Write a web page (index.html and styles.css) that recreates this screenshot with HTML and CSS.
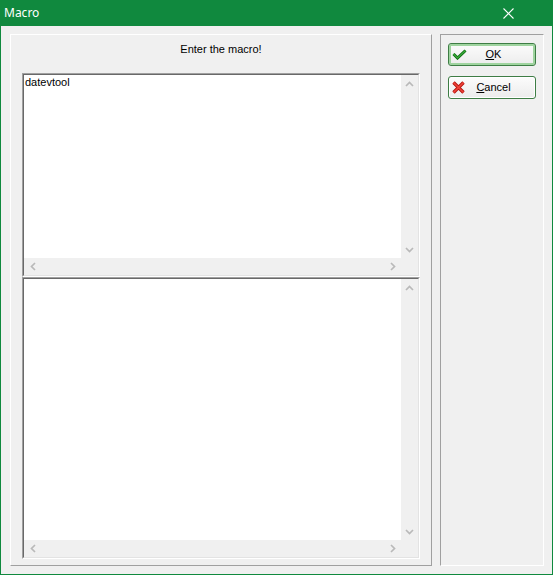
FILE: index.html
```html
<!DOCTYPE html>
<html lang="en">
<head>
    <meta charset="UTF-8">
    <title>Macro</title>
    <link rel="stylesheet" href="styles.css">
</head>
<body>
<div class="window">
    <div class="titlebar">
        <span class="title">Macro</span>
        <svg class="close" width="11" height="11" viewBox="0 0 11 11">
            <path d="M0.5 0.5 L10.5 10.5 M10.5 0.5 L0.5 10.5" stroke="#fff" stroke-width="1.1" fill="none"/>
        </svg>
    </div>

    <div class="client">
        <div class="panel-main">
            <div class="prompt">Enter the macro!</div>

            <div class="memo memo-top">
                <div class="memo-body">
                    <div class="memo-text">datevtool</div>
                    <div class="vscroll">
                        <span class="arrow"><svg width="9" height="6" viewBox="0 0 9 6"><polyline points="1,5 4.5,1.5 8,5"/></svg></span>
                        <span class="arrow"><svg width="9" height="6" viewBox="0 0 9 6"><polyline points="1,1 4.5,4.5 8,1"/></svg></span>
                    </div>
                    <div class="hscroll">
                        <span class="arrow"><svg width="6" height="9" viewBox="0 0 6 9"><polyline points="5,1 1.5,4.5 5,8"/></svg></span>
                        <span class="arrow"><svg width="6" height="9" viewBox="0 0 6 9"><polyline points="1,1 4.5,4.5 1,8"/></svg></span>
                    </div>
                    <div class="corner"></div>
                </div>
            </div>

            <div class="memo memo-bottom">
                <div class="memo-body">
                    <div class="memo-text"></div>
                    <div class="vscroll">
                        <span class="arrow"><svg width="9" height="6" viewBox="0 0 9 6"><polyline points="1,5 4.5,1.5 8,5"/></svg></span>
                        <span class="arrow"><svg width="9" height="6" viewBox="0 0 9 6"><polyline points="1,1 4.5,4.5 8,1"/></svg></span>
                    </div>
                    <div class="hscroll">
                        <span class="arrow"><svg width="6" height="9" viewBox="0 0 6 9"><polyline points="5,1 1.5,4.5 5,8"/></svg></span>
                        <span class="arrow"><svg width="6" height="9" viewBox="0 0 6 9"><polyline points="1,1 4.5,4.5 1,8"/></svg></span>
                    </div>
                    <div class="corner"></div>
                </div>
            </div>
        </div>

        <div class="panel-side">
            <button class="btn btn-default">
                <svg class="btn-icon" width="15" height="11" viewBox="0 0 15 11">
                    <polyline points="1.5,5 5.5,9 13.5,1.5" fill="none" stroke="#0e6a12" stroke-width="3"/>
                    <polyline points="1.5,5 5.5,9 13.5,1.5" fill="none" stroke="#3aae3a" stroke-width="1.2"/>
                </svg>
                <span class="btn-label"><u>O</u>K</span>
            </button>
            <button class="btn">
                <svg class="btn-icon" width="13" height="13" viewBox="0 0 13 13">
                    <path d="M1.5 1.5 L11.5 11.5 M11.5 1.5 L1.5 11.5" fill="none" stroke="#b3140f" stroke-width="3.4"/>
                    <path d="M1.5 1.5 L11.5 11.5 M11.5 1.5 L1.5 11.5" fill="none" stroke="#f0443a" stroke-width="1.6"/>
                </svg>
                <span class="btn-label"><u>C</u>ancel</span>
            </button>
        </div>
    </div>
</div>
</body>
</html>
```

FILE: styles.css
```css
* {
    margin: 0;
    padding: 0;
    box-sizing: border-box;
}

body {
    font-family: "Liberation Sans", Arial, sans-serif;
    font-size: 11px;
    color: #000;
    background: #f0f0f0;
}

.window {
    width: 553px;
    height: 575px;
    display: flex;
    flex-direction: column;
    background: #10893e;
}

.titlebar {
    height: 26px;
    display: flex;
    align-items: center;
    justify-content: space-between;
    padding-left: 4px;
    color: #fff;
}

.title {
    font-family: "Noto Sans", "Open Sans", sans-serif;
    font-size: 12px;
    line-height: 16px;
}

.close {
    margin-right: 39px;
}

.client {
    flex: 1;
    margin: 0 1px 1px 1px;
    background: #f0f0f0;
    display: flex;
    gap: 8px;
    padding: 8px 8px 8px 9px;
}

/* raised bevel round the edit area */
.panel-main {
    width: 422px;
    display: flex;
    flex-direction: column;
    border: 1px solid;
    border-color: #fff #a0a0a0 #a0a0a0 #fff;
    padding: 8px 11px 6px 11px;
}

.prompt {
    text-align: center;
    line-height: 13px;
    margin-bottom: 17px;
}

.memo {
    border: 1px solid;
    border-color: #a0a0a0 #fff #fff #a0a0a0;
}

.memo-top {
    height: 204px;
}

.memo-bottom {
    height: 282px;
}

.memo-body {
    height: 100%;
    border: 1px solid;
    border-color: #696969 #e3e3e3 #e3e3e3 #696969;
    display: grid;
    grid-template-columns: 1fr 17px;
    grid-template-rows: 1fr 17px;
}

.memo-text {
    background: #fff;
    padding: 1px 0 0 1px;
    line-height: 13px;
}

.vscroll,
.hscroll,
.corner {
    background: #f0f0f0;
}

.vscroll {
    display: flex;
    flex-direction: column;
    justify-content: space-between;
}

.hscroll {
    display: flex;
    justify-content: space-between;
}

.arrow {
    width: 17px;
    height: 17px;
    display: flex;
    align-items: center;
    justify-content: center;
}

.arrow polyline {
    fill: none;
    stroke: #b9b9b9;
    stroke-width: 1.7;
}

/* lowered bevel round the buttons */
.panel-side {
    width: 104px;
    border: 1px solid;
    border-color: #a0a0a0 #fff #fff #a0a0a0;
    padding: 8px 0 0 7px;
    display: flex;
    flex-direction: column;
    gap: 10px;
}

.btn {
    width: 88px;
    height: 23px;
    display: grid;
    grid-template-columns: 18px 1fr 18px;
    align-items: center;
    padding-left: 3px;
    border: 1px solid #3e7d45;
    border-radius: 3px;
    background: linear-gradient(#fcfcfc, #ececec);
    box-shadow: inset 0 0 0 1px #fff;
    font-family: "Liberation Sans", Arial, sans-serif;
    font-size: 11px;
    color: #000;
}

.btn-default {
    box-shadow: inset 0 0 0 2px #9fd49f;
}

.btn-icon {
    display: block;
}

.btn-label {
    text-align: center;
    line-height: 13px;
}

.btn-label u {
    text-underline-offset: 1px;
}
```
